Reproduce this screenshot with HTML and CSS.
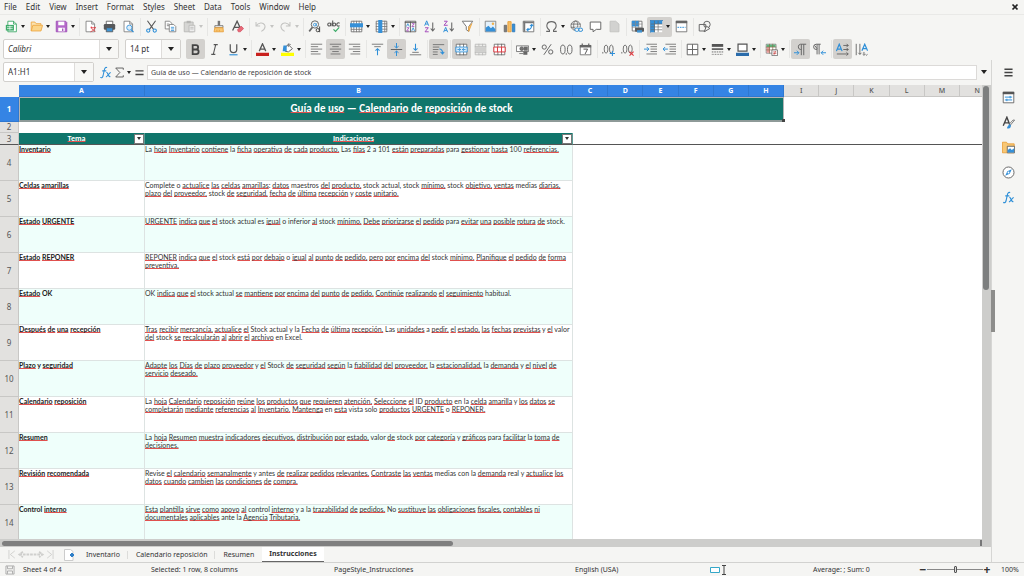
FILE: index.html
```html
<!DOCTYPE html>
<html lang="en">
<head>
<meta charset="utf-8">
<title>Calendario de reposición de stock</title>
<link rel="stylesheet" href="styles.css">
</head>
<body>
<div class="app">
  <nav class="menubar">
    <button>File</button><button>Edit</button><button>View</button><button>Insert</button><button>Format</button><button>Styles</button><button>Sheet</button><button>Data</button><button>Tools</button><button>Window</button><button>Help</button>
    <button class="close" aria-label="Close"><svg class="x" viewBox="0 0 8 8"><path d="M2 2l4 4M6 2l-4 4" stroke="#222" stroke-width="1.400"/></svg></button>
  </nav>

  <div class="toolbar standard">
    <button class="tb dd" aria-label="New"><svg viewBox="0 0 16 16"><path d="M3.500 1.500h7l3.500 3.500v9.500h-10.500z" fill="#fff" stroke="#2fa35c"/><path d="M10.500 1.500v3.500h3.500" fill="none" stroke="#2fa35c"/><path d="M1 6h10v7H1z" fill="#3cab68"/><path d="M2.500 8.300h7M2.500 10.600h7M6 7v5" stroke="#fff" stroke-width=".9"/></svg></button>
    <button class="tb dd" aria-label="Open"><svg viewBox="0 0 16 16"><path d="M1.500 13.500v-11h4.500l1.500 2h6v2" fill="#fbe3b0" stroke="#eda43c"/><path d="M1.500 13.500l2-7h12l-2 7z" fill="#fbd58a" stroke="#eda43c"/></svg></button>
    <button class="tb dd" aria-label="Save"><svg viewBox="0 0 16 16"><path d="M1.500 1.500h11.500l1.500 1.500v11.500h-13z" fill="#b568c9" stroke="#9a49b4"/><path d="M4 2h7.500v4.500H4z" fill="#fff"/><path d="M4 9.500h8V14H4z" fill="#fff"/><path d="M9.500 10.500v3" stroke="#9a49b4" stroke-width="1.500"/></svg></button>
    <i class="sep"></i>
    <button class="tb" aria-label="Export as PDF"><svg viewBox="0 0 16 16"><path d="M2.500 1.500h7l3.500 3.500v9.500h-10.500z" fill="#fff" stroke="#777"/><path d="M9.500 1.500v3.500h3.500" fill="none" stroke="#777"/><path d="M8 9.500h6.500M8 14.500c3-1 5-3 6-6M9 8c0 3 2 5 5 6" fill="none" stroke="#e0383e"/></svg></button>
    <button class="tb" aria-label="Print"><svg viewBox="0 0 16 16"><path d="M4 1.500h8V6H4z" fill="#fff" stroke="#555"/><rect x="1" y="5" width="14" height="7" rx="1.500" fill="#56585a"/><path d="M4 9.500h8v5H4z" fill="#3f94d4" stroke="#555"/></svg></button>
    <button class="tb" aria-label="Print preview"><svg viewBox="0 0 16 16"><path d="M2.500 1.500h7l3.500 3.500v9.500h-10.500z" fill="#fff" stroke="#777"/><path d="M9.500 1.500v3.500h3.500" fill="none" stroke="#777"/><circle cx="9" cy="9.500" r="3.200" fill="#dceefb" stroke="#2e8fd8"/><path d="M11.200 12l3 3" stroke="#2e8fd8" stroke-width="1.500"/></svg></button>
    <i class="sep"></i>
    <button class="tb" aria-label="Cut"><svg viewBox="0 0 16 16" fill="none"><path d="M3 1l7.500 10.500M13 1L5.500 11.500" stroke="#555" stroke-width="1.300"/><circle cx="4" cy="13" r="2" stroke="#2e8fd8" stroke-width="1.300"/><circle cx="12" cy="13" r="2" stroke="#2e8fd8" stroke-width="1.300"/></svg></button>
    <button class="tb" aria-label="Copy"><svg viewBox="0 0 16 16" fill="#fff"><path d="M1.500 1.500h5.500l2.500 2.500v7h-8z" stroke="#777"/><path d="M3.500 5h3M3.500 7h3" stroke="#777"/><path d="M6.500 5.500h5.500l2.500 2.500v6.500h-8z" stroke="#777"/><path d="M8.500 9h4M8.500 11h4M8.500 13h4" stroke="#2e8fd8"/></svg></button>
    <button class="tb dd dim" aria-label="Paste"><svg viewBox="0 0 16 16"><path d="M1.500 2.500h11v12h-11z" fill="#d6d6d4" stroke="#b5b5b3"/><path d="M4.500 1h5v3h-5z" fill="#b5b5b3"/><path d="M7.500 6.500h7v8h-7z" fill="#eee" stroke="#b5b5b3"/><path d="M9 9h4M9 11h4" stroke="#b5b5b3"/></svg></button>
    <i class="sep"></i>
    <button class="tb" aria-label="Clone formatting"><svg viewBox="0 0 16 16"><path d="M7 1h3v6H7z" fill="#777"/><path d="M3.500 7h10v2.500h-10z" fill="#f5f5f5" stroke="#666"/><path d="M3.500 9.500h10l.5 5H2.500z" fill="#f8c774" stroke="#e89b33"/><path d="M6 12v2M9 12v2" stroke="#e89b33"/></svg></button>
    <button class="tb" aria-label="Clear formatting"><svg viewBox="0 0 16 16" fill="none"><path d="M2 13L7.500 1.500 12 11M4 9h6" stroke="#555" stroke-width="1.600"/><path d="M8 12l4.500-4.500 3 3-4 4H9z" fill="#e86a78" stroke="#cf4355" stroke-width=".8"/></svg></button>
    <i class="sep"></i>
    <button class="tb dd dim" aria-label="Undo"><svg viewBox="0 0 16 16" fill="none" stroke="#c4c4c2" stroke-width="1.300"><path d="M2.500 2.500v5h5M2.500 7.500c3-4.500 8.500-5 10.500-1.500 1.500 3-.5 6-4 8"/></svg></button>
    <button class="tb dd dim" aria-label="Redo"><svg viewBox="0 0 16 16" fill="none" stroke="#c4c4c2" stroke-width="1.300"><path d="M13.500 2.500v5h-5M13.500 7.500c-3-4.500-8.500-5-10.500-1.500-1.500 3 .5 6 4 8"/></svg></button>
    <i class="sep"></i>
    <button class="tb" aria-label="Find and replace"><svg viewBox="0 0 16 16" fill="none"><circle cx="8.500" cy="5.500" r="4.500" stroke="#666" stroke-width="1.200"/><path d="M5.500 9L1.500 14" stroke="#666" stroke-width="2"/><circle cx="8.300" cy="5.800" r="1.600" stroke="#2e8fd8"/><path d="M10.200 4v3.700" stroke="#2e8fd8"/><circle cx="12" cy="12.500" r="2" stroke="#444" stroke-width="1.200"/><path d="M14.300 8v7" stroke="#444" stroke-width="1.200"/></svg></button>
    <button class="tb" aria-label="Spelling"><svg viewBox="0 0 16 16" fill="none"><g stroke="#555" stroke-width="1.300"><circle cx="2.800" cy="5.500" r="1.900"/><path d="M4.900 3.300v4.500M7 .5v7.300"/><circle cx="8.800" cy="5.500" r="1.900"/><path d="M15.500 4c-1.500-1.200-3.500-.3-3.500 1.500s2 2.700 3.500 1.500"/></g><path d="M8 11.500l2.500 2.500 4.500-5" stroke="#3cab68" stroke-width="1.500"/></svg></button>
    <i class="sep"></i>
    <button class="tb dd" aria-label="Row"><svg viewBox="0 0 16 16"><path d="M1.500 1.500h13v13h-13z" fill="#fff" stroke="#666"/><path d="M4.700 1v14M8 1v14M11.300 1v14M1 11.500h14" stroke="#777"/><path d="M0 4h16v5H0z" fill="#3590d8"/></svg></button>
    <button class="tb dd" aria-label="Column"><svg viewBox="0 0 16 16"><path d="M1.500 1.500h13v13h-13z" fill="#fff" stroke="#666"/><path d="M1 4.700h14M1 8h14M1 11.300h14M12 1v14" stroke="#777"/><path d="M4 0h5v16H4z" fill="#3590d8"/></svg></button>
    <i class="sep"></i>
    <button class="tb" aria-label="Sort"><svg viewBox="0 0 16 16" fill="none"><path d="M1.500 1.500h13v13h-13zM1 3h14M8 2v13" stroke="#555"/><path d="M3 8l1.700-3.500L6.500 8" stroke="#2e8fd8"/><path d="M3.200 9.500h3l-3 4h3M9.700 4.500h3l-3 3.500h3" stroke="#a44bbb"/><path d="M9.500 13.500l1.700-4 1.800 4" stroke="#2e8fd8"/></svg></button>
    <button class="tb" aria-label="Sort ascending"><svg viewBox="0 0 16 16" fill="none"><path d="M2 7l2.500-6L7 7M3 5h3" stroke="#2e8fd8" stroke-width="1.200"/><path d="M2.500 9.500h4l-4 5h4.500" stroke="#a44bbb" stroke-width="1.200"/><path d="M12 3v10M9.500 10.500L12 13.500l2.500-3" stroke="#666" stroke-width="1.300"/></svg></button>
    <button class="tb" aria-label="Sort descending"><svg viewBox="0 0 16 16" fill="none"><path d="M2.500 1.500h4l-4 5h4.500" stroke="#a44bbb" stroke-width="1.200"/><path d="M2 15l2.500-6L7 15M3 13h3" stroke="#2e8fd8" stroke-width="1.200"/><path d="M12 3v10M9.500 10.500L12 13.500l2.500-3" stroke="#666" stroke-width="1.300"/></svg></button>
    <button class="tb" aria-label="AutoFilter"><svg viewBox="0 0 16 16" fill="#fff"><path d="M1.500 1.500h13l-5 6.500v6l-3-2V8z" stroke="#777" stroke-width="1.200"/><path d="M9.500 8v6l4-10" fill="#f7bf66" stroke="#eda43c"/></svg></button>
    <i class="sep"></i>
    <button class="tb" aria-label="Insert image"><svg viewBox="0 0 16 16"><path d="M1.500 1.500h13v13h-13z" fill="#e4f1fb" stroke="#777"/><path d="M2 13V9.500L5.500 7l3 3L11 8l3 3.500V14H2z" fill="#3590d8"/><circle cx="11" cy="4.500" r="1.500" fill="#f2b04a"/></svg></button>
    <button class="tb" aria-label="Insert chart"><svg viewBox="0 0 16 16"><path d="M1.500 6.500h3v8h-3z" fill="#7d7d7d" stroke="#666"/><path d="M6 2h4v12.500H6z" fill="#f7bf66" stroke="#e89b33"/><path d="M11.500 5h3v9.500h-3z" fill="#3590d8" stroke="#2c78b8"/></svg></button>
    <button class="tb" aria-label="Pivot table"><svg viewBox="0 0 16 16" fill="none"><path d="M1.500 1.500h13v13h-13z" fill="#fff" stroke="#666"/><path d="M1.500 3h13M3 1.500v13" stroke="#777" stroke-width="2"/><path d="M6 12c4 0 6-2 6-6M9.800 7.500L12 5.500l2 2M8 10l-2 2 2 2" stroke="#2e8fd8" stroke-width="1.300"/></svg></button>
    <i class="sep"></i>
    <button class="tb dd" aria-label="Special character"><svg viewBox="0 0 16 16" fill="none"><path d="M1.500 14h4v-1.500C0 8 2 2 8 2s8 6 2.500 10.500V14h4" stroke="#666" stroke-width="1.300"/></svg></button>
    <button class="tb" aria-label="Hyperlink"><svg viewBox="0 0 16 16" fill="none"><circle cx="7" cy="7" r="5.800" stroke="#666"/><ellipse cx="7" cy="7" rx="2.500" ry="5.800" stroke="#666"/><path d="M1 5h12M1 9h12" stroke="#666"/><path d="M6 9h10v6H6z" fill="#f5f5f3"/><rect x="6" y="10" width="5" height="4" rx="2" stroke="#2e8fd8" stroke-width="1.200"/><rect x="10.500" y="10" width="5" height="4" rx="2" stroke="#2e8fd8" stroke-width="1.200"/></svg></button>
    <button class="tb" aria-label="Comment"><svg viewBox="0 0 16 16"><path d="M1.500 2.500h13v9H9l-4 3v-3H1.500z" fill="#fff" stroke="#666" stroke-width="1.200"/></svg></button>
    <button class="tb dim" aria-label="Headers and footers"><svg viewBox="0 0 16 16"><path d="M2.500 1.500h7l4 3.500v9.500h-11z" fill="#d2d2d0" stroke="#c0c0be"/></svg></button>
    <i class="sep"></i>
    <button class="tb" aria-label="Print area"><svg viewBox="0 0 16 16"><path d="M1.500 1.500h12v12h-12z" fill="#fff" stroke="#666"/><path d="M1 1h9v7H1z" fill="#3590d8"/><path d="M5.500 1v13M9.500 1v13M1 5h13M1 9h13" stroke="#888" stroke-width=".8"/><rect x="5" y="9.500" width="11" height="5" rx="1" fill="#56585a"/><path d="M7.500 12.500h6v3h-6z" fill="#3f94d4"/></svg></button>
    <button class="tb dd on" aria-label="Freeze rows and columns"><svg viewBox="0 0 16 16"><path d="M1 1h14v14H1z" fill="#fff"/><path d="M1 1h14v4H1zM1 5h5v10H1z" fill="#3590d8"/><path d="M5.500 1v14M10 1v14M1 5h14M1 8.500h14M1 12h14" stroke="#666" stroke-width=".8"/><path d="M.5.500v15M0 .500h16" stroke="#2c78b8"/></svg></button>
    <button class="tb" aria-label="Split window"><svg viewBox="0 0 16 16"><path d="M1.500 1.500h13v13h-13z" fill="#fff" stroke="#666"/><path d="M1 1h14v3H1z" fill="#666"/><path d="M3 9h10" stroke="#2e8fd8" stroke-width="1.200" stroke-dasharray="2 1"/></svg></button>
    <i class="sep"></i>
    <button class="tb" aria-label="Draw functions"><svg viewBox="0 0 16 16" fill="none" stroke="#666" stroke-width="1.200"><path d="M1.500 5.500h8v8h-8z"/><circle cx="11" cy="5.500" r="4"/><path d="M7.500 14.500l3-7 4 3z" fill="#f5f5f3"/></svg></button>
  </div>

  <div class="toolbar formatting">
    <div class="combo font"><input class="it" aria-label="Font name" value="Calibri"><button aria-label="Font list"></button></div>
    <div class="combo size"><input aria-label="Font size" value="14 pt"><button aria-label="Size list"></button></div>
    <button class="tb on" aria-label="Bold"><svg viewBox="0 0 16 16" fill="none"><path d="M4.500 2.500h4a2.700 2.700 0 0 1 0 5.500h-4zM4.500 8h4.500a2.800 2.800 0 0 1 0 5.700h-4.500z" stroke="#444" stroke-width="2.200"/></svg></button>
    <button class="tb" aria-label="Italic"><svg viewBox="0 0 16 16"><path d="M7 2h5M4 14h5M9.500 2l-3 12" stroke="#555" stroke-width="1.300"/></svg></button>
    <button class="tb dd" aria-label="Underline"><svg viewBox="0 0 16 16" fill="none"><path d="M4 1.500v6.500c0 5 8 5 8 0V1.500" stroke="#555" stroke-width="1.500"/><path d="M3 14.500h10" stroke="#2e8fd8" stroke-width="1.400"/></svg></button>
    <i class="sep"></i>
    <button class="tb dd" aria-label="Font color"><svg viewBox="0 0 16 16" fill="none"><path d="M4 10l4-9 4 9M5.500 7.500h5" stroke="#555" stroke-width="1.600"/><path d="M0 12h16v4H0z" fill="#c9211e"/></svg></button>
    <button class="tb dd" aria-label="Background color"><svg viewBox="0 0 16 16" fill="none"><path d="M4 6l5-4 5 5-5 4-4-1z" fill="#fff" stroke="#666" stroke-width="1.200"/><path d="M3 3h4v7H2z" fill="#3590d8"/><path d="M9 5V1l3 1" stroke="#666"/><path d="M0 12h16v4H0z" fill="#ffff00"/></svg></button>
    <i class="sep"></i>
    <button class="tb" aria-label="Align left"><svg viewBox="0 0 16 16" stroke="#666"><path d="M1 1.500h14M1 4.500h9M1 7.500h14M1 10.500h9M1 13.500h12"/></svg></button>
    <button class="tb on" aria-label="Center"><svg viewBox="0 0 16 16" stroke="#666"><path d="M1 1.500h14M4 4.500h8M1 7.500h14M4 10.500h8M2 13.500h12"/></svg></button>
    <button class="tb" aria-label="Align right"><svg viewBox="0 0 16 16" stroke="#666"><path d="M1 1.500h14M6 4.500h9M1 7.500h14M6 10.500h9M3 13.500h12"/></svg></button>
    <i class="sep"></i>
    <button class="tb" aria-label="Align top"><svg viewBox="0 0 16 16" fill="none"><path d="M1 1.500h14M4 4.500h8" stroke="#666"/><path d="M8 15V7M5.500 9.500L8 7l2.500 2.500" stroke="#2e8fd8" stroke-width="1.300"/></svg></button>
    <button class="tb on" aria-label="Center vertically"><svg viewBox="0 0 16 16" fill="none"><path d="M1 8h14" stroke="#666" stroke-width="1.300"/><path d="M8 0v6M5.500 4L8 6l2.500-2M8 16v-6M5.500 12L8 10l2.500 2" stroke="#2e8fd8" stroke-width="1.200"/></svg></button>
    <button class="tb" aria-label="Align bottom"><svg viewBox="0 0 16 16" fill="none"><path d="M1 14.500h14M4 11.500h8" stroke="#666"/><path d="M8 1v8M5.500 6.500L8 9l2.500-2.500" stroke="#2e8fd8" stroke-width="1.300"/></svg></button>
    <i class="sep"></i>
    <button class="tb on" aria-label="Wrap text"><svg viewBox="0 0 16 16" fill="none"><path d="M1 2h14M1 5h8M1 8h7M1 11h6M1 14h6" stroke="#666"/><path d="M9 7.500c3 0 4 2 4 5M10.500 11l2.500 2.500 2-2.500" stroke="#2e8fd8" stroke-width="1.300"/></svg></button>
    <i class="sep"></i>
    <button class="tb on" aria-label="Merge and center"><svg viewBox="0 0 16 16"><path d="M1.500 1.500h13v13h-13z" fill="#fff" stroke="#666"/><path d="M6 1v4M10.500 1v4M6 11v4M10.500 11v4" stroke="#666"/><path d="M1 5h14v6H1z" fill="#d8ebfa" stroke="#2e8fd8"/><path d="M3 8h4M9 8h4M5 6.500L7 8 5 9.500M11 6.500L9 8l2 1.500" fill="none" stroke="#2e8fd8"/></svg></button>
    <button class="tb dim" aria-label="Merge cells"><svg viewBox="0 0 16 16"><path d="M1.500 1.500h13v13h-13zM1 4.500h14M6 1v3M10.500 1v3M1 11.500h14M6 12v3M10.500 12v3" fill="#ececea" stroke="#b8b8b6"/><path d="M2 5h12v6H2z" fill="#cfcfcd"/></svg></button>
    <button class="tb" aria-label="Unmerge cells"><svg viewBox="0 0 16 16"><path d="M1.500 1.500h13v13h-13z" fill="#fff" stroke="#666"/><path d="M6 1v4M10.500 1v4M6 11v4M10.500 11v4" stroke="#666"/><path d="M1 5h14v6H1zM5.500 5v6M10.500 5v6" fill="#fff" stroke="#d9363e" stroke-width="1.200"/></svg></button>
    <i class="sep"></i>
    <button class="tb dd" aria-label="Currency"><svg viewBox="0 0 16 16"><path d="M.500 3.500h15v7H.500z" fill="#fff" stroke="#666"/><path d="M9.500 4.500h5v5h-5z" fill="#6a6a6a"/><circle cx="7" cy="7" r="2.200" fill="#777" stroke="#555"/><path d="M9 10.500h5v4H9z" fill="#666"/><path d="M4 13h5" stroke="#666"/></svg></button>
    <button class="tb" aria-label="Percent"><svg viewBox="0 0 16 16" fill="none" stroke="#666" stroke-width="1.200"><circle cx="4" cy="5" r="2.600"/><circle cx="12" cy="11" r="2.600"/><path d="M12.500 1.500l-9 13"/></svg></button>
    <button class="tb" aria-label="Number"><svg viewBox="0 0 16 16" fill="none" stroke="#666" stroke-width="1.200"><ellipse cx="3.500" cy="8" rx="2.800" ry="5.500"/><ellipse cx="12" cy="8" rx="2.800" ry="5.500"/><path d="M7.700 12.500v2"/></svg></button>
    <button class="tb" aria-label="Date"><svg viewBox="0 0 16 16" fill="none"><path d="M1.500 3h13v11.500h-13z" fill="#fff" stroke="#666"/><path d="M1 2.500h14v3H1z" fill="#666"/><path d="M4 .500v3M12 .500v3" stroke="#666" stroke-width="1.500"/><path d="M5.500 7.500h5l-3 6" stroke="#555" stroke-width="1.200"/></svg></button>
    <i class="sep"></i>
    <button class="tb" aria-label="Add decimal place"><svg viewBox="0 0 16 16" fill="none"><g stroke="#666" stroke-width="1.100"><path d="M1 11v2"/><ellipse cx="5" cy="7.500" rx="2.300" ry="5"/><ellipse cx="11.500" cy="7.500" rx="2.300" ry="5"/></g><path d="M9.500 13h6.500M12.800 9.800v6.400" stroke="#2e8fd8" stroke-width="1.300"/></svg></button>
    <button class="tb" aria-label="Delete decimal place"><svg viewBox="0 0 16 16" fill="none"><g stroke="#666" stroke-width="1.100"><path d="M1 11v2"/><ellipse cx="5" cy="7.500" rx="2.300" ry="5"/><ellipse cx="11.500" cy="7.500" rx="2.300" ry="5"/></g><path d="M10.500 10.500l5 5M15.500 10.500l-5 5" stroke="#e0383e" stroke-width="1.300"/></svg></button>
    <i class="sep"></i>
    <button class="tb" aria-label="Increase indent"><svg viewBox="0 0 16 16" fill="none"><path d="M3 1.500h13M8 4.500h8M8 7.500h8M8 10.500h8M3 13.500h13" stroke="#666"/><path d="M0 7.500h6M3.500 5L6 7.500 3.500 10" stroke="#2e8fd8" stroke-width="1.200"/></svg></button>
    <button class="tb" aria-label="Decrease indent"><svg viewBox="0 0 16 16" fill="none"><path d="M3 1.500h13M8 4.500h8M8 7.500h8M8 10.500h8M3 13.500h13" stroke="#666"/><path d="M0 7.500h6M2.500 5L0 7.500 2.500 10" stroke="#2e8fd8" stroke-width="1.200"/></svg></button>
    <i class="sep"></i>
    <button class="tb dd" aria-label="Borders"><svg viewBox="0 0 16 16"><path d="M1.500 1.500h13v13h-13zM8 1.500v13M1.500 8h13" fill="#fff" stroke="#666" stroke-width="1.200"/></svg></button>
    <button class="tb dd" aria-label="Border style"><svg viewBox="0 0 16 16" stroke="#555"><path d="M1 3h14" stroke-width="3.500"/><path d="M1 7.500h14" stroke-width="2"/><path d="M1 11h14" stroke-dasharray="2 1"/><path d="M1 14h14" stroke-dasharray="1 1"/></svg></button>
    <button class="tb dd" aria-label="Border color"><svg viewBox="0 0 16 16"><path d="M2.500 1.500h11v8.500h-11z" fill="#fff" stroke="#555" stroke-width="1.500"/><path d="M0 12h16v4H0z" fill="#2a6cab"/></svg></button>
    <i class="sep"></i>
    <button class="tb dd" aria-label="Conditional formatting"><svg viewBox="0 0 16 16"><path d="M1.500 1.500h12v11h-12z" fill="#fff" stroke="#777"/><path d="M2 2h11v3H2z" fill="#5cb87e"/><path d="M2 5h4v7H2z" fill="#e79a9a"/><path d="M5.500 1v12M9.500 1v12M1 5h13M1 8.500h13" stroke="#8a6a4a" stroke-width=".8"/><path d="M8.500 8.500h7v7h-7z" fill="#fff" stroke="#666"/><path d="M10 11h4M10 13h4M13 10l-2 4.500" stroke="#c9504e" stroke-width=".9"/></svg></button>
    <i class="sep"></i>
    <button class="tb on" aria-label="Left-to-right"><svg viewBox="0 0 16 16" fill="none"><path d="M9 15V1.500M12 15V1.500M15 1.500H8a3.300 3.300 0 0 0 0 6.500h1" stroke="#666" stroke-width="1.200"/><path d="M0 12h6M3.500 9.500L6 12l-2.500 2.500" stroke="#2e8fd8" stroke-width="1.200"/></svg></button>
    <button class="tb" aria-label="Right-to-left"><svg viewBox="0 0 16 16" fill="none"><path d="M5 14V1.500M7.500 14V1.500M9.500 1.500H4A3 3 0 0 0 4 8h1M2 3l3 4" stroke="#666" stroke-width="1.200"/><path d="M10 12h6M12.500 9.500L10 12l2.500 2.500" stroke="#2e8fd8" stroke-width="1.200"/></svg></button>
    <i class="sep"></i>
    <button class="tb on" aria-label="Text direction left to right"><svg viewBox="0 0 16 16" fill="none"><path d="M.500 10L4 1.500 7.500 10M2 7.500h4" stroke="#2e8fd8" stroke-width="1.500"/><path d="M9 3h6M9 8h6M1 13.500h14M13 1l2 2-2 2M13 6l2 2-2 2M13 11.500l2 2-2 2" stroke="#555"/></svg></button>
    <button class="tb" aria-label="Text direction top to bottom"><svg viewBox="0 0 16 16" fill="none"><path d="M8.500 9.500L12 1.500 15.500 9.500M10 7h4" stroke="#2e8fd8" stroke-width="1.500"/><path d="M1.500 1v14M6 1v13M4 12l2 2 2-2M9.500 14l1.500 1 1.500-1M13 14l1.200 1 1.200-1M11 11v3" stroke="#555"/></svg></button>
  </div>

  <div class="main">
    <div class="doc">
      <div class="formulabar">
        <div class="combo name"><input aria-label="Name box" value="A1:H1"><button aria-label="Name list"></button></div>
        <button class="tb fn" aria-label="Function wizard"><svg viewBox="0 0 16 16" fill="none" stroke="#2e8fd8" stroke-width="1.300"><path d="M10 2c-2-1-3 .5-3.500 3L5 12c-.5 2-1.500 3-3.500 2M4 6h5M9 8c2-1 2 6 5 5M14.500 8c-2 0-3.500 5-6 5.500"/></svg></button>
        <button class="tb dd sum" aria-label="Select function"><svg viewBox="0 0 16 16" fill="none" stroke="#555" stroke-width="1.300"><path d="M13.500 4V1.500h-11L8.500 8l-6 6.500h11V12"/></svg></button>
        <button class="tb fn" aria-label="Formula"><svg viewBox="0 0 16 16" stroke="#444" stroke-width="1.800"><path d="M3 6h10M3 10.500h10"/></svg></button>
        <input class="formula" aria-label="Input line" value="Guía de uso — Calendario de reposición de stock">
        <button class="expand" aria-label="Expand formula bar"></button>
      </div>
      <div class="gridwrap">
        <div class="sheet">
          <table>
            <colgroup><col class="c-num"><col class="c-a"><col class="c-b"><col><col><col><col><col><col><col><col><col><col><col><col class="c-n"></colgroup>
            <thead><tr><th class="corner"></th><th class="sel">A</th><th class="sel">B</th><th class="sel">C</th><th class="sel">D</th><th class="sel">E</th><th class="sel">F</th><th class="sel">G</th><th class="sel">H</th><th>I</th><th>J</th><th>K</th><th>L</th><th>M</th><th class="last">N</th></tr></thead>
            <tbody>
              <tr class="r1"><th class="sel">1</th><td colspan="8" class="title"><u>Guía</u> de <u>uso</u> — <u>Calendario</u> de <u>reposición</u> de stock</td><td colspan="6"></td></tr>
              <tr class="r2"><th>2</th><td colspan="14"></td></tr>
              <tr class="r3"><th>3</th><td class="head"><div><span><u>Tema</u></span><button aria-label="Filter Tema"></button></div></td><td class="head"><div><span><u>Indicaciones</u></span><button aria-label="Filter Indicaciones"></button></div></td><td colspan="12"></td></tr>
              <tr class="alt"><th>4</th><td class="k"><u>Inventario</u></td><td class="v">La <u>hoja</u> <u>Inventario</u> <u>contiene</u> la <u>ficha</u> <u>operativa</u> <u>de</u> <u>cada</u> <u>producto.</u> Las <u>filas</u> 2 a 101 <u>están</u> <u>preparadas</u> para <u>gestionar</u> <u>hasta</u> 100 <u>referencias.</u></td><td colspan="12"></td></tr>
              <tr><th>5</th><td class="k"><u>Celdas</u> <u>amarillas</u></td><td class="v">Complete o <u>actualice</u> <u>las</u> <u>celdas</u> <u>amarillas</u>: <u>datos</u> maestros <u>del</u> <u>producto,</u> stock actual, stock <u>mínimo,</u> stock <u>objetivo,</u> <u>ventas</u> medias <u>diarias,</u><br><u>plazo</u> <u>del</u> <u>proveedor,</u> stock <u>de</u> <u>seguridad,</u> <u>fecha</u> <u>de</u> <u>última</u> <u>recepción</u> y <u>coste</u> <u>unitario.</u></td><td colspan="12"></td></tr>
              <tr class="alt"><th>6</th><td class="k"><u>Estado</u> <u>URGENTE</u></td><td class="v"><u>URGENTE</u> <u>indica</u> <u>que</u> <u>el</u> stock actual es <u>igual</u> o inferior <u>al</u> stock <u>mínimo.</u> <u>Debe</u> <u>priorizarse</u> <u>el</u> <u>pedido</u> para <u>evitar</u> <u>una</u> <u>posible</u> <u>rotura</u> <u>de</u> stock.</td><td colspan="12"></td></tr>
              <tr><th>7</th><td class="k"><u>Estado</u> <u>REPONER</u></td><td class="v"><u>REPONER</u> <u>indica</u> <u>que</u> <u>el</u> stock <u>está</u> <u>por</u> <u>debajo</u> o <u>igual</u> <u>al</u> <u>punto</u> <u>de</u> <u>pedido,</u> <u>pero</u> <u>por</u> <u>encima</u> <u>del</u> stock <u>mínimo.</u> <u>Planifique</u> <u>el</u> <u>pedido</u> <u>de</u> <u>forma</u><br><u>preventiva.</u></td><td colspan="12"></td></tr>
              <tr class="alt"><th>8</th><td class="k"><u>Estado</u> OK</td><td class="v">OK <u>indica</u> <u>que</u> <u>el</u> stock actual <u>se</u> <u>mantiene</u> <u>por</u> <u>encima</u> <u>del</u> <u>punto</u> <u>de</u> <u>pedido.</u> <u>Continúe</u> <u>realizando</u> <u>el</u> <u>seguimiento</u> habitual.</td><td colspan="12"></td></tr>
              <tr><th>9</th><td class="k"><u>Después</u> <u>de</u> <u>una</u> <u>recepción</u></td><td class="v"><u>Tras</u> <u>recibir</u> <u>mercancía,</u> <u>actualice</u> <u>el</u> Stock actual y la <u>Fecha</u> <u>de</u> <u>última</u> <u>recepción.</u> Las <u>unidades</u> a <u>pedir,</u> <u>el</u> <u>estado,</u> <u>las</u> <u>fechas</u> <u>previstas</u> y <u>el</u> valor<br><u>del</u> stock <u>se</u> <u>recalcularán</u> <u>al</u> <u>abrir</u> <u>el</u> <u>archivo</u> en Excel.</td><td colspan="12"></td></tr>
              <tr class="alt"><th>10</th><td class="k"><u>Plazo</u> y <u>seguridad</u></td><td class="v"><u>Adapte</u> <u>los</u> <u>Días</u> <u>de</u> <u>plazo</u> <u>proveedor</u> y <u>el</u> Stock <u>de</u> <u>seguridad</u> <u>según</u> la <u>fiabilidad</u> <u>del</u> <u>proveedor,</u> la <u>estacionalidad,</u> la <u>demanda</u> y <u>el</u> <u>nivel</u> <u>de</u><br><u>servicio</u> <u>deseado.</u></td><td colspan="12"></td></tr>
              <tr><th>11</th><td class="k"><u>Calendario</u> <u>reposición</u></td><td class="v">La <u>hoja</u> <u>Calendario</u> <u>reposición</u> <u>reúne</u> <u>los</u> <u>productos</u> <u>que</u> <u>requieren</u> <u>atención.</u> <u>Seleccione</u> <u>el</u> ID <u>producto</u> en la <u>celda</u> <u>amarilla</u> y <u>los</u> <u>datos</u> <u>se</u><br><u>completarán</u> <u>mediante</u> <u>referencias</u> <u>al</u> <u>Inventario.</u> <u>Mantenga</u> en <u>esta</u> vista solo <u>productos</u> <u>URGENTE</u> o <u>REPONER.</u></td><td colspan="12"></td></tr>
              <tr class="alt"><th>12</th><td class="k"><u>Resumen</u></td><td class="v">La <u>hoja</u> <u>Resumen</u> <u>muestra</u> <u>indicadores</u> <u>ejecutivos,</u> <u>distribución</u> <u>por</u> <u>estado,</u> valor <u>de</u> stock <u>por</u> <u>categoría</u> y <u>gráficos</u> para <u>facilitar</u> la <u>toma</u> <u>de</u><br><u>decisiones.</u></td><td colspan="12"></td></tr>
              <tr><th>13</th><td class="k"><u>Revisión</u> <u>recomendada</u></td><td class="v">Revise <u>el</u> <u>calendario</u> <u>semanalmente</u> y antes <u>de</u> <u>realizar</u> <u>pedidos</u> <u>relevantes.</u> <u>Contraste</u> <u>las</u> <u>ventas</u> medias con la <u>demanda</u> real y <u>actualice</u> <u>los</u><br><u>datos</u> <u>cuando</u> <u>cambien</u> <u>las</u> <u>condiciones</u> <u>de</u> <u>compra.</u></td><td colspan="12"></td></tr>
              <tr class="alt"><th>14</th><td class="k">Control <u>interno</u></td><td class="v"><u>Esta</u> <u>plantilla</u> <u>sirve</u> <u>como</u> <u>apoyo</u> <u>al</u> control <u>interno</u> y a la <u>trazabilidad</u> <u>de</u> <u>pedidos.</u> No <u>sustituye</u> <u>las</u> <u>obligaciones</u> <u>fiscales,</u> <u>contables</u> <u>ni</u><br><u>documentales</u> <u>aplicables</u> ante la <u>Agencia</u> <u>Tributaria.</u></td><td colspan="12"></td></tr>
            </tbody>
          </table>
        </div>
        <div class="vscroll"><i></i></div>
      </div>
      <div class="hscroll"><i></i><b></b></div>
      <div class="tabs">
        <div class="tabnav"><svg viewBox="0 0 52 10" fill="none" stroke="#cfcfcd"><path d="M1.500 0v10M8 1L3 5l5 4M50.500 0v10M44 1l5 4-5 4"/><path d="M17 2l-4 3 4 3M35 2l4 3-4 3M13 5h26" stroke-width="2" stroke-dasharray="3 1"/></svg></div>
        <button class="add" aria-label="Add sheet"><svg viewBox="0 0 12 12"><path d="M1.500.500h6l2.500 2v9H1.500z" fill="#fff" stroke="#ccc"/><path d="M9 4v4M7 6h4" stroke="#2f7fc8" stroke-width="2"/></svg></button>
        <button>Inventario</button><button>Calendario reposición</button><button>Resumen</button><button class="active">Instrucciones</button>
      </div>
    </div>
    <aside class="sidebar">
      <span class="handle"></span>
      <button aria-label="Sidebar settings"><svg viewBox="0 0 16 16"><path d="M3 4h10M3 8h10M3 12h10" stroke="#444" stroke-width="1.600"/></svg></button>
      <button aria-label="Properties"><svg viewBox="0 0 16 16" fill="none"><path d="M1.500 1.500h13v13h-13z" fill="#fff" stroke="#555"/><path d="M1 1h14v3H1z" fill="#555"/><path d="M3.500 7.500h9M3.500 11h9M10 6v3M6 9.500v3" stroke="#2e8fd8" stroke-width="1.200"/></svg></button>
      <button aria-label="Styles"><svg viewBox="0 0 16 16" fill="none"><path d="M1.500 12L6 1.500 10 12M3 8.500h6" stroke="#444" stroke-width="1.700"/><path d="M15.500 5l-5 6-1.500-1 4.500-5z" fill="#fff" stroke="#666"/><path d="M6 15c4 1 5-1 5-4l-2-1c-1 1-2 2-3 5z" fill="#3590d8"/></svg></button>
      <button aria-label="Gallery"><svg viewBox="0 0 16 16"><path d="M.500 14.500v-13h5l1.500 2h8v11z" fill="#f8c774" stroke="#e89b33"/><path d="M6.500 6.500h9v8h-9z" fill="#fff" stroke="#555"/><path d="M7 14v-3l3-2 2 2 3-2v5z" fill="#3590d8"/></svg></button>
      <button aria-label="Navigator"><svg viewBox="0 0 16 16"><circle cx="8" cy="8" r="6.800" fill="#fff" stroke="#666" stroke-width="1.200"/><path d="M12 4l-2.500 5.500L4 12l2.500-5.500z" fill="#3590d8"/><circle cx="8" cy="8" r="1.100" fill="#fff"/></svg></button>
      <button aria-label="Functions"><svg viewBox="0 0 16 16" fill="none" stroke="#2e8fd8" stroke-width="1.400"><path d="M10 2c-2-1-3 .5-3.500 3L5 12c-.5 2-1.500 3-3.500 2M4 6h5M9 8c2-1 2 6 5 5M14.500 8c-2 0-3.500 5-6 5.500"/></svg></button>
    </aside>
  </div>

  <footer class="status">
    <span class="s-icon"><svg viewBox="0 0 16 16" fill="none" stroke="#999" stroke-width="1.200"><path d="M1.500 1.500h13v13h-13zM4 2v4h8V2M4 14V9.500h8V14"/></svg></span>
    <span class="s-sheet">Sheet 4 of 4</span>
    <span class="s-selected">Selected: 1 row, 8 columns</span>
    <span class="s-style">PageStyle_Instrucciones</span>
    <span class="s-lang">English (USA)</span>
    <span class="s-mode"><svg viewBox="0 0 18 10" fill="none"><path d="M1.500 2.500h9v5h-9z" fill="#fff" stroke="#35a7c8"/><path d="M15 1v8M13 .500h4M13 9.500h4" stroke="#444"/></svg></span>
    <span class="s-sum">Average: ; Sum: 0</span>
    <span class="s-zoom"><button aria-label="Zoom out">−</button><input type="range" aria-label="Zoom" min="0" max="100" value="50"><button aria-label="Zoom in">+</button></span>
    <span class="s-pct">100%</span>
  </footer>
</div>
</body>
</html>
```
FILE: styles.css
```css
* { box-sizing: border-box; }
body {
  margin: 0;
  background: #f5f5f3;
  color: #333;
  font: 8px/12px "Noto Sans", "Open Sans", sans-serif;
}
button, input { font: inherit; color: inherit; margin: 0; padding: 0; border: 0; background: none; }
.app { display: flex; flex-direction: column; height: 100vh; overflow: hidden; }

.menubar { display: flex; align-items: center; gap: 9px; padding: 0 4px; height: 15px; border-bottom: 1px solid #e9e9e7; }
.menubar .close { margin-left: auto; }
.x { display: block; width: 10px; height: 10px; }

.toolbar { display: flex; align-items: center; height: 23px; }
.standard { padding-left: 2px; }
.formatting { height: 22px; padding-left: 3px; }
.tb { flex: none; width: 19px; height: 20px; display: flex; align-items: center; justify-content: center; border-radius: 2px; }
.tb svg { display: block; width: 13px; height: 13px; }
.dd { width: 25px; justify-content: flex-start; padding-left: 3px; gap: 3px; }
.dd::after { content: ""; border: 2px solid transparent; border-top: 3px solid #222; border-bottom: 0; }
.dim::after { border-top-color: #c4c4c2; }
.on { background: #d3d1ce; }
.sep { flex: none; width: 4px; height: 18px; background: linear-gradient(#e6e6e4, #e6e6e4) center / 1px 100% no-repeat; }

.combo { display: flex; height: 20px; border: 1px solid #d2d0cd; border-radius: 2px; background: #fff; }
.combo input { flex: 1; min-width: 0; padding-left: 4px; }
.combo button { width: 19px; display: flex; align-items: center; justify-content: center; background: #f7f7f5; border-left: 1px solid #dedcda; }
.combo button::after, .expand::after { content: ""; border: 3px solid transparent; border-top: 4px solid #222; border-bottom: 0; }
.font { width: 116px; margin-right: 6px; }
.size { width: 56px; margin-right: 5px; }
.it { font-style: italic; }

.main { flex: 1; min-height: 0; display: flex; }
.doc { flex: 1; min-width: 0; display: flex; flex-direction: column; }
.formulabar { display: flex; align-items: center; height: 25px; padding: 0 0 1px 3px; }
.name { width: 91px; height: 20px; margin-right: 3px; }
.fn { width: 16px; }
.sum svg { width: 11px; height: 11px; }
.sum { width: 18px; padding-left: 1px; gap: 2px; }
.formula { flex: 1; min-width: 0; height: 15px; padding-left: 3px; background: #fff; border: 1px solid #dcdad8; color: #444; font-size: 7px; }
.expand { width: 14px; display: flex; justify-content: center; }

.gridwrap { flex: 1; min-height: 0; display: flex; }
.sheet { flex: 1; min-width: 0; overflow: hidden; background: #fff; }
table { width: 100%; table-layout: fixed; border-collapse: separate; border-spacing: 0; }
.c-num { width: 19px; }
.c-a { width: 126px; }
.c-b { width: 428px; }
.c-n { width: 22px; }
th, td { padding: 0; }
th { font-weight: 400; color: #555; background: #e2e1df; border-right: 1px solid #c8c7c5; border-bottom: 1px solid #c8c7c5; }
thead th { height: 12px; font-size: 7px; line-height: 11px; font-weight: 500; }
th.corner { background: #f5f5f3; border-color: #f5f5f3; }
th.sel { background: #3584e4; color: #fff; font-weight: 700; border-color: #2f78d0; }
th.last { text-align: right; padding-right: 2px; border-right: 0; }
tbody tr { height: 36px; }
tbody tr.r1 { height: 25px; }
tbody tr.r2 { height: 11px; }
tbody tr.r3 { height: 12px; }
.r2 th, .r3 th { line-height: 10px; }
.r3 th, .r3 td { border-bottom: 1px solid #555; }
u { text-decoration: underline solid #e0504e 1px; text-underline-offset: 0; text-decoration-skip-ink: none; }
.title { position: relative; background: #10756b; color: #fff; text-align: center; font: 700 11px/14px Carlito, "Open Sans", sans-serif; border: 1px solid #b4b4b4; border-bottom: 2px solid #8e9a98; }
.title::after { content: ""; position: absolute; right: -2px; bottom: -2px; width: 3px; height: 3px; background: #444; }
.head { background: #10756b; color: #fff; font: 700 8px/11px Carlito, "Open Sans", sans-serif; border-right: 1px solid #5a9c95; }
.head div { display: flex; align-items: center; height: 11px; }
.head span { flex: 1; text-align: center; }
.head button { width: 10px; height: 10px; display: flex; align-items: center; justify-content: center; background: #fff; border: 1px solid #777; }
.head button::after { content: ""; border: 2px solid transparent; border-top: 3px solid #333; border-bottom: 0; }
.k, .v { vertical-align: top; white-space: nowrap; border-right: 1px solid #dde3e2; border-bottom: 1px solid #dde3e2; font: 7px/8px Lato, Carlito, sans-serif; color: #333; }
.k { font-weight: 700; color: #222; }
.alt .k, .alt .v { background: #effffb; }

.vscroll { width: 9px; background: #cdcdcb; padding: 1px 2px 0 1px; }
.vscroll i { display: block; height: 45%; border-radius: 3px; background: #7d7f7f; }
.hscroll { display: flex; align-items: center; justify-content: space-between; height: 8px; padding: 0 9px 0 2px; background: #cdcdcb; }
.hscroll i { width: 46%; height: 5px; border-radius: 3px; background: #7f7f7f; }
.hscroll b { width: 2px; height: 6px; background: #777; }
.tabs { display: flex; height: 15px; font-size: 7px; }
.tabs button { padding: 0 8px; }
.tabs button.active { background: #fff; font-weight: 700; padding: 0 7px; border-bottom: 1px solid #666; }
.tabnav { width: 58px; padding: 3px 0 0 5px; }
.tabnav svg { display: block; width: 52px; height: 9px; }
.tabs .add { width: 20px; padding: 0 0 0 5px; }
.add svg { display: block; width: 12px; height: 12px; }
.add + button, .add + button + button { background: linear-gradient(#dcdcda, #dcdcda) right / 1px 8px no-repeat; }

.sidebar { position: relative; width: 33px; display: flex; flex-direction: column; align-items: center; gap: 9px; padding-top: 4px; border-left: 1px solid #d6d6d4; }
.sidebar button { height: 16px; display: flex; align-items: center; }
.sidebar svg { width: 13px; height: 13px; }
.handle { position: absolute; left: -1px; top: 230px; width: 4px; height: 42px; background: #8d8d8b; }

.status { display: flex; align-items: center; height: 14px; border-top: 1px solid #d2d2d0; white-space: nowrap; font-size: 7px; }
.status svg { display: block; }
.s-icon { width: 23px; padding-left: 5px; }
.s-icon svg { width: 10px; height: 10px; }
.s-sheet { width: 128px; }
.s-selected { width: 183px; }
.s-style { width: 241px; }
.s-lang { width: 134px; }
.s-mode { flex: 1; }
.s-mode svg { width: 18px; height: 10px; }
.s-sum { width: 106px; }
.s-zoom { display: flex; align-items: center; width: 82px; }
.s-zoom button { font-size: 12px; font-weight: 700; width: 8px; }
.s-zoom input { appearance: none; width: 56px; height: 8px; background: linear-gradient(#888, #888) center / 100% 1px no-repeat; }
.s-zoom input::-webkit-slider-thumb { appearance: none; width: 3px; height: 7px; border-radius: 1px; background: #ddd; border: 1px solid #555; }
.s-pct { width: 23px; }
```
